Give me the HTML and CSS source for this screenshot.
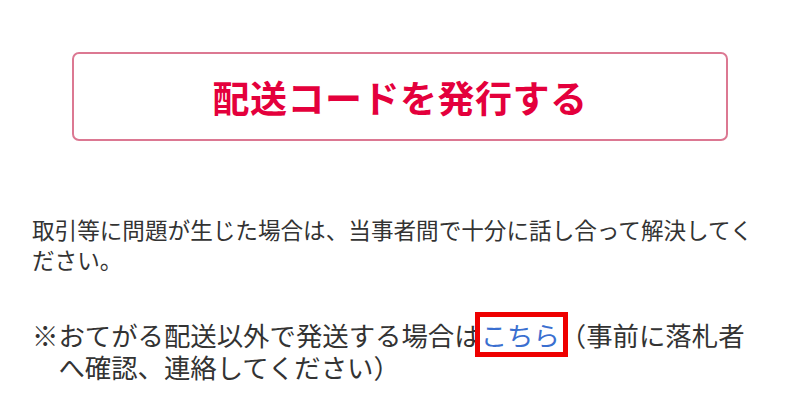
FILE: index.html
```html
<!DOCTYPE html>
<html lang="ja">
<head>
<meta charset="utf-8">
<link rel="stylesheet" href="styles.css">
</head>
<body>
<div class="page">
  <div class="btn-wrap">
    <a class="issue-btn" href="#">配送コードを発行する</a>
  </div>
  <p class="note">取引等に問題が生じた場合は、当事者間で十分に話し合って解決してください。</p>
  <p class="note2">※おてがる配送以外で発送する場合は<span class="mark"><a class="link" href="#">こちら</a></span>（事前に落札者へ確認、連絡してください）</p>
</div>
</body>
</html>
```
FILE: styles.css
```css
html, body {
  margin: 0;
  padding: 0;
  background: #fff;
}
body {
  font-family: "Noto Sans CJK JP", "Noto Sans", sans-serif;
  color: #333;
}
.page {
  width: 736px;
  padding: 52px 32px 0 32px;
}
.btn-wrap {
  display: flex;
  justify-content: center;
}
.issue-btn {
  box-sizing: border-box;
  width: 656px;
  height: 89px;
  display: flex;
  align-items: center;
  justify-content: center;
  border: 2px solid #dc7892;
  border-radius: 7px;
  color: #e4003c;
  font-weight: bold;
  font-size: 37px;
  text-decoration: none;
  letter-spacing: 0.5px;
}
.note {
  margin: 74px 0 0 0;
  font-size: 22.6px;
  line-height: 30px;
}
.note2 {
  margin: 44px 0 0 0;
  font-size: 26.4px;
  line-height: 32px;
  padding-left: 26.4px;
  text-indent: -26.4px;
}
.mark {
  position: relative;
  display: inline-block;
  text-indent: 0;
  line-height: 32px;
}
.mark::after {
  content: "";
  position: absolute;
  left: -6px;
  right: -8px;
  top: -7px;
  bottom: -6px;
  border: 5px solid #ee0000;
}
.link {
  color: #3a6fd0;
  text-decoration: none;
}
```
